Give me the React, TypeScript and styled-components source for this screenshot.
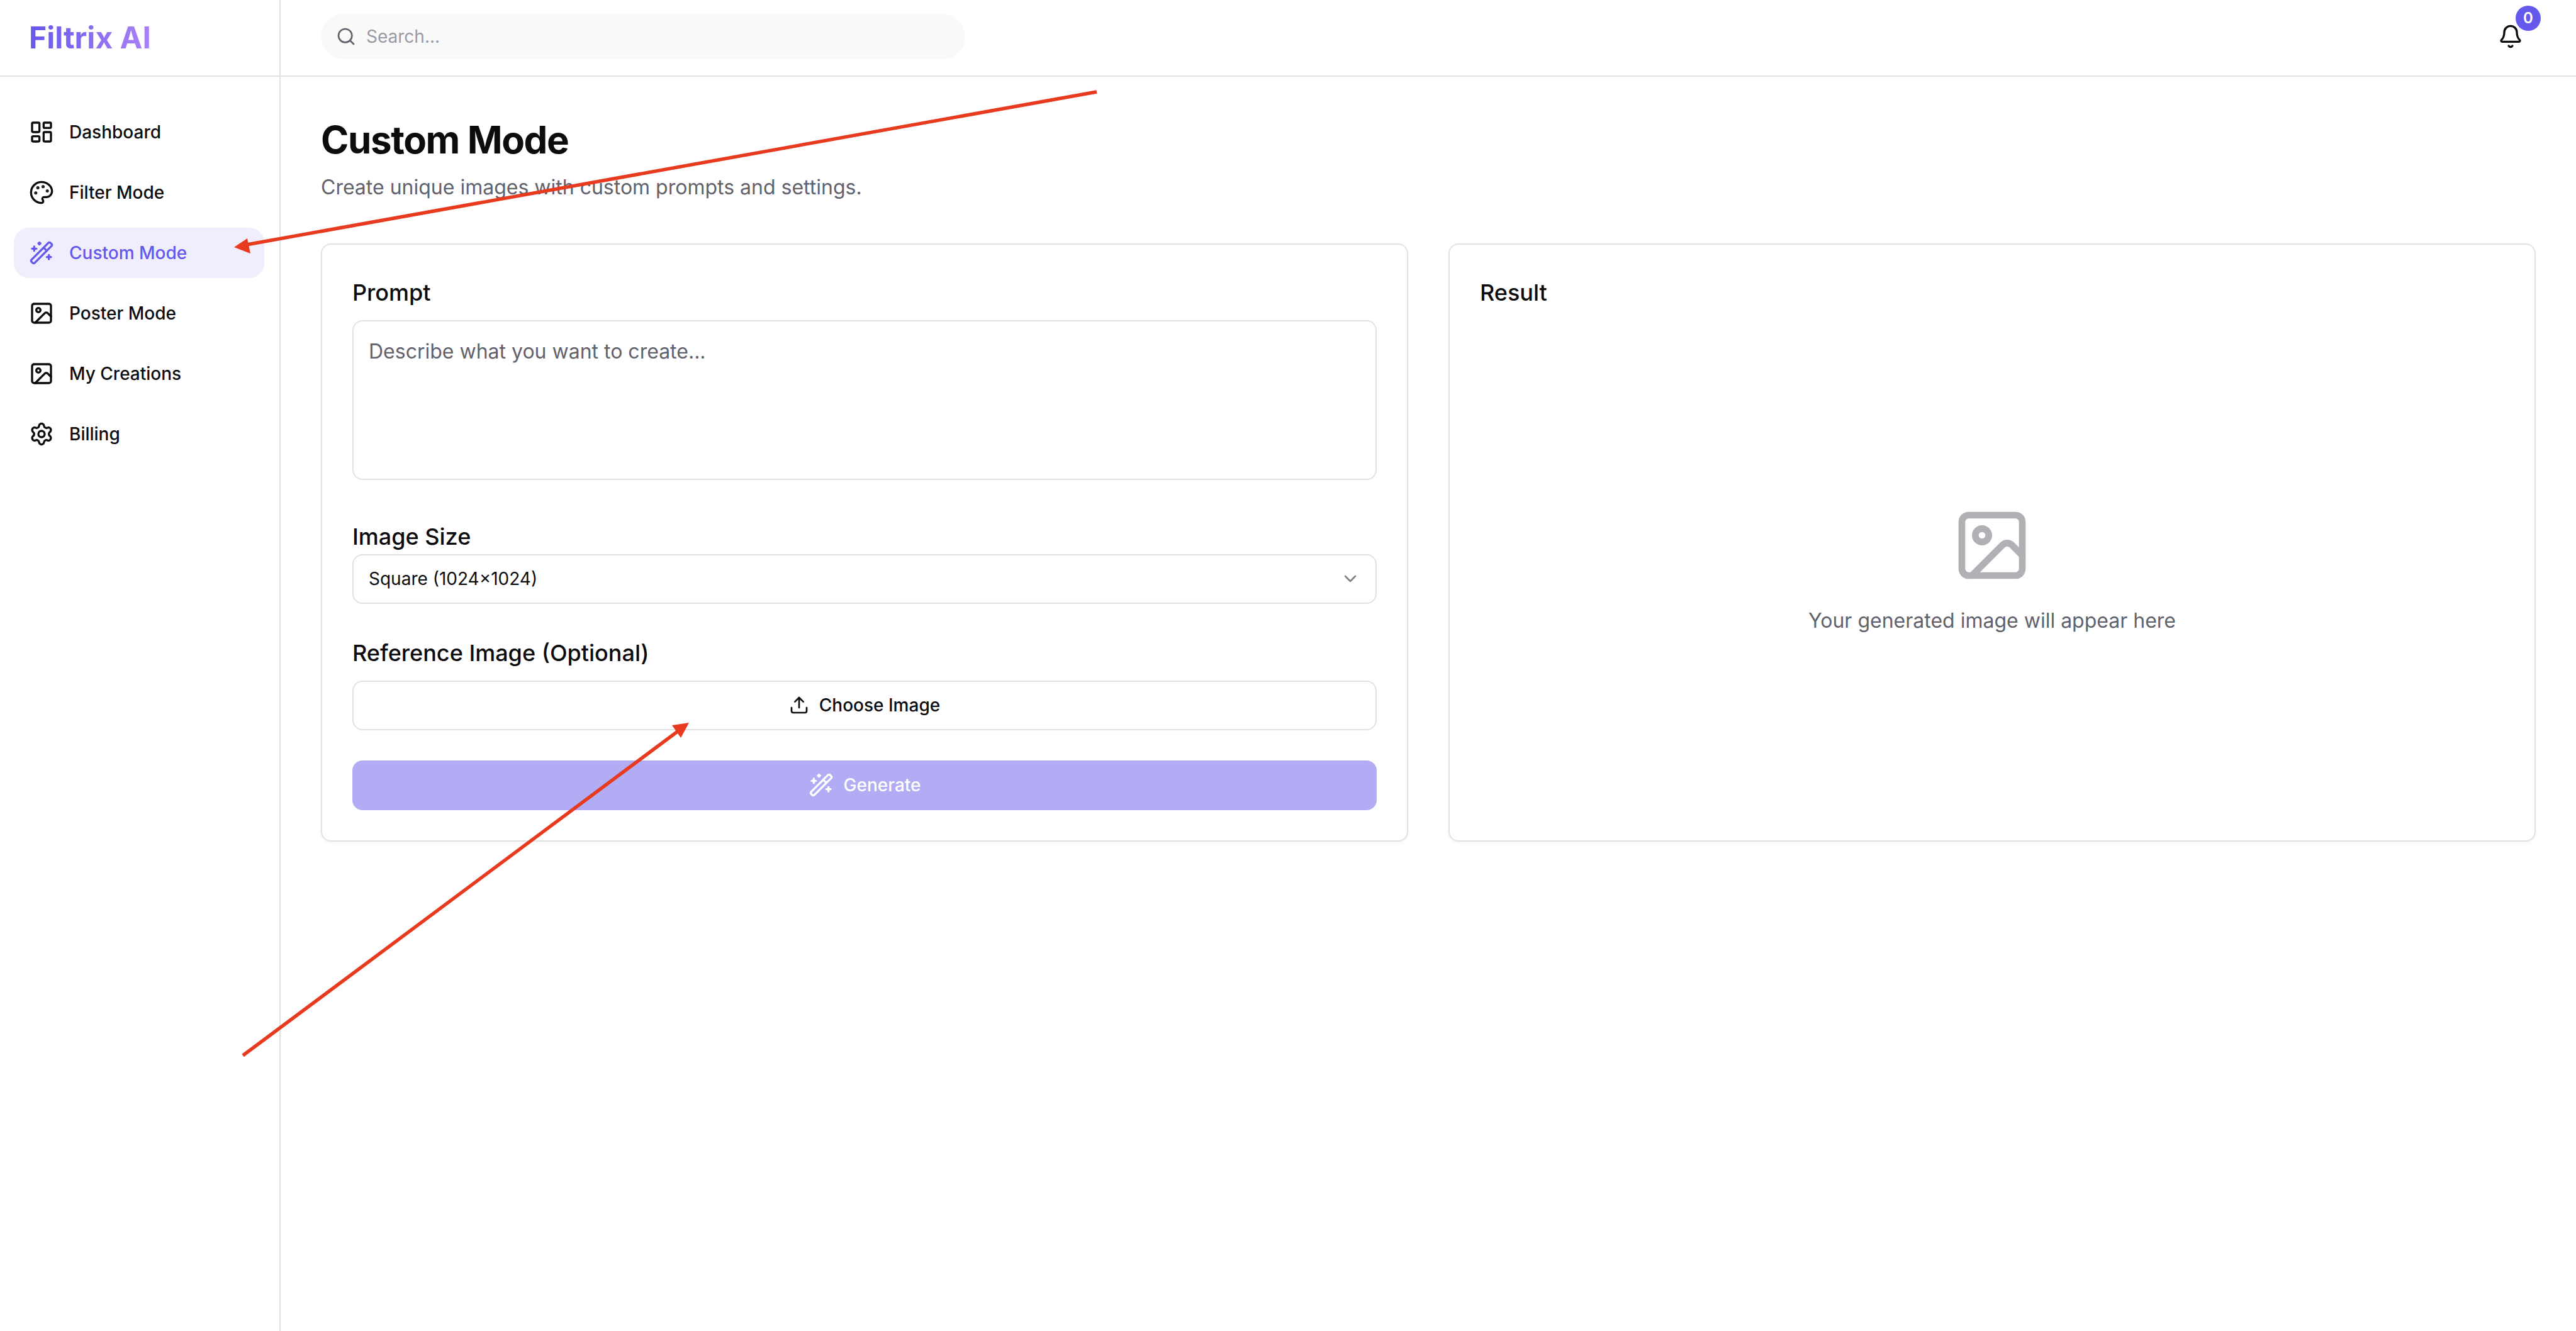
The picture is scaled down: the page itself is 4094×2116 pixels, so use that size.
import React from 'react';
import styled, { createGlobalStyle } from 'styled-components';
import {
  LayoutDashboard,
  WandSparkles,
  Image as ImageIcon,
  Settings,
  Search,
  Bell,
  ChevronDown,
  Upload,
} from 'lucide-react';

const GlobalStyle = createGlobalStyle`
  html, body {
    margin: 0;
    padding: 0;
    background: #fff;
  }
  body {
    font-family: Inter, "Liberation Sans", sans-serif;
    color: #0c0c0e;
  }
  * {
    box-sizing: border-box;
  }
`;

const Shell = styled.div`
  position: relative;
  display: flex;
  width: 4094px;
  height: 2116px;
  overflow: hidden;
  background: #fff;
`;

const Sidebar = styled.aside`
  width: 446px;
  flex-shrink: 0;
  border-right: 2px solid #e2e2e2;
`;

const LogoBar = styled.div`
  height: 122px;
  display: flex;
  align-items: center;
  padding-left: 46px;
  border-bottom: 2px solid #e2e2e2;
`;

const Logo = styled.span`
  font-size: 48px;
  font-weight: 700;
  line-height: 56px;
  background: linear-gradient(90deg, #6558ec, #ab82f7);
  -webkit-background-clip: text;
  background-clip: text;
  color: transparent;
`;

const Nav = styled.nav`
  display: flex;
  flex-direction: column;
  gap: 16px;
  padding: 48px 24px 0 22px;
`;

const NavItem = styled.div<{ $active?: boolean }>`
  height: 80px;
  display: flex;
  align-items: center;
  gap: 24px;
  padding: 0 24px;
  border-radius: 24px;
  font-size: 28px;
  font-weight: 500;
  background: ${props => (props.$active ? '#f0eefc' : 'transparent')};
  color: ${props => (props.$active ? '#6558ec' : '#0c0c0e')};
`;

const Main = styled.div`
  flex: 1;
  min-width: 0;
  display: flex;
  flex-direction: column;
`;

const TopBar = styled.header`
  height: 122px;
  flex-shrink: 0;
  display: flex;
  align-items: center;
  justify-content: space-between;
  padding: 0 80px 4px 64px;
  border-bottom: 2px solid #e2e2e2;
`;

const SearchBox = styled.div`
  width: 1024px;
  height: 72px;
  display: flex;
  align-items: center;
  gap: 16px;
  padding: 0 24px;
  border-radius: 36px;
  background: #f9f9f9;
  color: #62626c;
`;

const SearchText = styled.span`
  font-size: 28px;
  color: #9a9aa4;
`;

const BellWrap = styled.div`
  position: relative;
  width: 48px;
  height: 48px;
  display: flex;
  align-items: center;
  justify-content: center;
`;

const Badge = styled.span`
  position: absolute;
  top: -25px;
  right: -24px;
  width: 40px;
  height: 40px;
  border-radius: 50%;
  background: #6558ec;
  color: #fff;
  font-size: 24px;
  font-weight: 600;
  line-height: 40px;
  text-align: center;
`;

const Content = styled.main`
  padding: 64px 64px 0;
`;

const Title = styled.h1`
  margin: 0;
  font-size: 60px;
  font-weight: 700;
  line-height: 72px;
  letter-spacing: -1.4px;
`;

const Subtitle = styled.p`
  margin: 16px 0 0;
  font-size: 32px;
  line-height: 48px;
  color: #62626c;
`;

const Columns = styled.div`
  display: grid;
  grid-template-columns: 1fr 1fr;
  gap: 64px;
  margin-top: 65px;
`;

const Card = styled.section`
  display: flex;
  flex-direction: column;
  height: 951px;
  padding: 48px;
  border: 2px solid #e2e2e2;
  border-radius: 16px;
  box-shadow: 0 2px 4px rgba(0, 0, 0, 0.04);
`;

const Label = styled.div<{ $top?: number }>`
  margin-top: ${props => props.$top ?? 0}px;
  font-size: 36px;
  font-weight: 500;
  line-height: 56px;
`;

const Textarea = styled.div`
  height: 256px;
  margin-top: 16px;
  padding: 24px;
  border: 2px solid #e2e2e2;
  border-radius: 16px;
  font-size: 32px;
  line-height: 48px;
  color: #62626c;
`;

const Select = styled.div`
  height: 80px;
  display: flex;
  align-items: center;
  justify-content: space-between;
  padding: 0 24px;
  border: 2px solid #e2e2e2;
  border-radius: 16px;
  font-size: 28px;
`;

const OutlineButton = styled.div`
  height: 80px;
  margin-top: 16px;
  display: flex;
  align-items: center;
  justify-content: center;
  gap: 16px;
  border: 2px solid #e2e2e2;
  border-radius: 16px;
  font-size: 28px;
  font-weight: 500;
`;

const GenerateButton = styled.div`
  height: 80px;
  margin-top: 48px;
  display: flex;
  align-items: center;
  justify-content: center;
  gap: 16px;
  border-radius: 16px;
  background: #b1acf4;
  color: #fff;
  font-size: 28px;
  font-weight: 500;
`;

const Placeholder = styled.div`
  flex: 1;
  display: flex;
  flex-direction: column;
  align-items: center;
  justify-content: center;
  gap: 32px;
  padding-top: 33px;
  color: #62626c;
  font-size: 32px;
  line-height: 48px;
`;

const PlaceholderIcon = styled(ImageIcon)`
  color: #b0b0b5;
`;

const Annotations = styled.svg`
  position: absolute;
  inset: 0;
  pointer-events: none;
`;

// the palette in this app is the older lucide drawing, not the one in the package
const PaletteIcon = ({ size }: { size: number }) => (
  <svg
    width={size}
    height={size}
    viewBox="0 0 24 24"
    fill="none"
    stroke="currentColor"
    strokeWidth="2"
    strokeLinecap="round"
    strokeLinejoin="round"
  >
    <circle cx="13.5" cy="6.5" r=".5" fill="currentColor" />
    <circle cx="17.5" cy="10.5" r=".5" fill="currentColor" />
    <circle cx="8.5" cy="7.5" r=".5" fill="currentColor" />
    <circle cx="6.5" cy="12.5" r=".5" fill="currentColor" />
    <path d="M12 2C6.5 2 2 6.5 2 12s4.5 10 10 10c.926 0 1.648-.746 1.648-1.688 0-.437-.18-.835-.437-1.125-.29-.289-.438-.652-.438-1.125a1.64 1.64 0 0 1 1.668-1.668h1.996c3.051 0 5.555-2.503 5.555-5.554C21.965 6.012 17.461 2 12 2z" />
  </svg>
);

const navItems = [
  { label: 'Dashboard', icon: LayoutDashboard },
  { label: 'Filter Mode', icon: PaletteIcon },
  { label: 'Custom Mode', icon: WandSparkles, active: true },
  { label: 'Poster Mode', icon: ImageIcon },
  { label: 'My Creations', icon: ImageIcon },
  { label: 'Billing', icon: Settings },
];

export default function App() {
  return (
    <Shell>
      <GlobalStyle />
      <Sidebar>
        <LogoBar>
          <Logo>Filtrix AI</Logo>
        </LogoBar>
        <Nav>
          {navItems.map(({ label, icon: Icon, active }) => (
            <NavItem key={label} $active={active}>
              <Icon size={40} />
              {label}
            </NavItem>
          ))}
        </Nav>
      </Sidebar>
      <Main>
        <TopBar>
          <SearchBox>
            <Search size={32} />
            <SearchText>Search...</SearchText>
          </SearchBox>
          <BellWrap>
            <Bell size={40} />
            <Badge>0</Badge>
          </BellWrap>
        </TopBar>
        <Content>
          <Title>Custom Mode</Title>
          <Subtitle>Create unique images with custom prompts and settings.</Subtitle>
          <Columns>
            <Card>
              <Label>Prompt</Label>
              <Textarea>Describe what you want to create...</Textarea>
              <Label $top={62}>Image Size</Label>
              <Select>
                Square (1024×1024)
                <ChevronDown size={32} color="#808085" />
              </Select>
              <Label $top={50}>Reference Image (Optional)</Label>
              <OutlineButton>
                <Upload size={32} />
                Choose Image
              </OutlineButton>
              <GenerateButton>
                <WandSparkles size={40} />
                Generate
              </GenerateButton>
            </Card>
            <Card>
              <Label>Result</Label>
              <Placeholder>
                <PlaceholderIcon size={128} />
                Your generated image will appear here
              </Placeholder>
            </Card>
          </Columns>
        </Content>
      </Main>
      {/* red markup arrows drawn over the screenshot */}
      <Annotations width="4094" height="2116" viewBox="0 0 4094 2116">
        <line x1="1743" y1="146" x2="392" y2="389" stroke="#e73a1f" strokeWidth="5.5" />
        <polygon points="372,393 393,379 398,403" fill="#e73a1f" />
        <line x1="386" y1="1678" x2="1078" y2="1162" stroke="#e73a1f" strokeWidth="5.5" />
        <polygon points="1095,1149 1068,1153 1082,1173" fill="#e73a1f" />
      </Annotations>
    </Shell>
  );
}
